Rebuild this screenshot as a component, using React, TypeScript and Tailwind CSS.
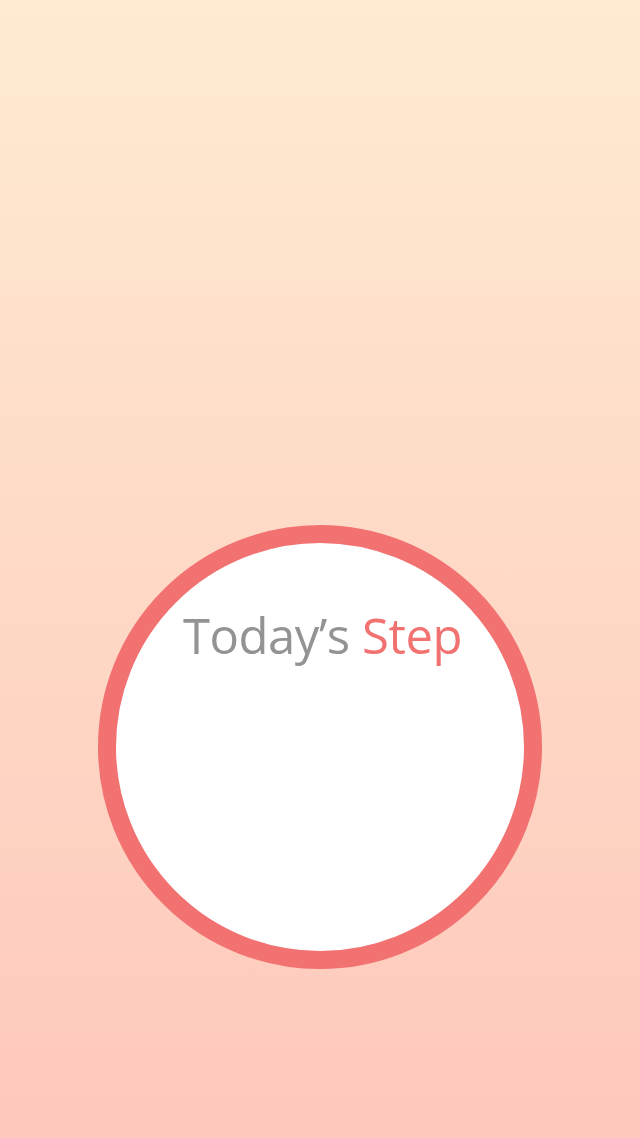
import React from 'react';

export default function App() {
  return (
    <div className="w-[640px] h-[1138px] bg-gradient-to-b from-[#feebd0] to-[#fec8bc] flex flex-col items-center pt-[525px]">
      <div className="w-[444px] h-[444px] rounded-full bg-white border-[18px] border-[#f27171] flex flex-col items-center pt-[68px]">
        <h1 className="text-[49px] leading-none font-normal tracking-[-0.45px] pl-[5px] font-['Open_Sans',sans-serif]">
          <span className="text-[#939393]">Today’s </span>
          <span className="text-[#f27171]">Step</span>
        </h1>
      </div>
    </div>
  );
}
